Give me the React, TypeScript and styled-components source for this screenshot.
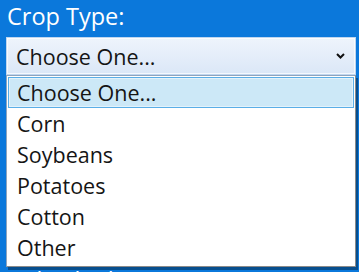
import React from 'react';
import styled, { createGlobalStyle } from 'styled-components';

const GlobalStyle = createGlobalStyle`
  body {
    margin: 0;
    background: #0b78db;
    font-family: 'Open Sans', 'Noto Sans', sans-serif;
    overflow: hidden;
  }
`;

const Form = styled.div`
  display: flex;
  flex-direction: column;
  padding: 0 3px 0 6px;
`;

// $skip leaves room for the fields that sit under the open menu
const Field = styled.div<{ $skip?: number }>`
  display: flex;
  flex-direction: column;
  height: 88px;
  margin-top: ${(p) => (p.$skip ? p.$skip * 88 : 0)}px;
`;

const Label = styled.div`
  color: #ffffff;
  font-size: 23.5px;
  line-height: 32px;
  padding-left: 1px;
  margin-bottom: 5px;
`;

const SelectBox = styled.div`
  position: relative;
  box-sizing: border-box;
  height: 38px;
  display: flex;
  align-items: center;
  justify-content: space-between;
  padding: 0 10px 0 9px;
  border: 1px solid #bfd6f0;
  box-shadow: inset 0 0 0 1px rgba(255, 255, 255, 0.7);
  background: linear-gradient(#eef4fc, #dbe7f7);
  color: #151515;
  font-size: 21.5px;
`;

const Menu = styled.div`
  position: absolute;
  z-index: 10;
  top: calc(100% + 1px);
  left: -1px;
  right: -1px;
  box-sizing: border-box;
  padding: 1px 1px 3px;
  background: #ffffff;
  border: 1px solid #8ea4bd;
  border-right-color: #8a8a8a;
  border-bottom-color: #8a8a8a;
  box-shadow: 2px 3px 0 rgba(0, 0, 0, 0.35);
`;

const Option = styled.div<{ $active?: boolean }>`
  box-sizing: border-box;
  height: 31px;
  display: flex;
  align-items: center;
  padding-left: 8px;
  font-size: 21.5px;
  color: #151515;
  border: 1px solid ${(p) => (p.$active ? '#5aaee7' : 'transparent')};
  background: ${(p) => (p.$active ? '#cce8f7' : 'transparent')};
  box-shadow: ${(p) => (p.$active ? 'inset 0 0 0 1px rgba(255,255,255,0.45)' : 'none')};
`;

const Chevron = () => (
  <svg width="9" height="6" viewBox="0 0 9 6">
    <path d="M1 1 L4.5 4.5 L8 1" fill="none" stroke="#111" strokeWidth="2" />
  </svg>
);

const options = ['Choose One...', 'Corn', 'Soybeans', 'Potatoes', 'Cotton', 'Other'];

const App: React.FC = () => {
  return (
    <>
      <GlobalStyle />
      <Form>
        <Field>
          <Label>Crop Type:</Label>
          <SelectBox>
            <span>Choose One...</span>
            <Chevron />
            <Menu>
              {options.map((o, i) => (
                <Option key={o} $active={i === 0}>
                  {o}
                </Option>
              ))}
            </Menu>
          </SelectBox>
        </Field>
        <Field $skip={2}>
          <Label>Individual Acreage:</Label>
        </Field>
      </Form>
    </>
  );
};

export default App;
